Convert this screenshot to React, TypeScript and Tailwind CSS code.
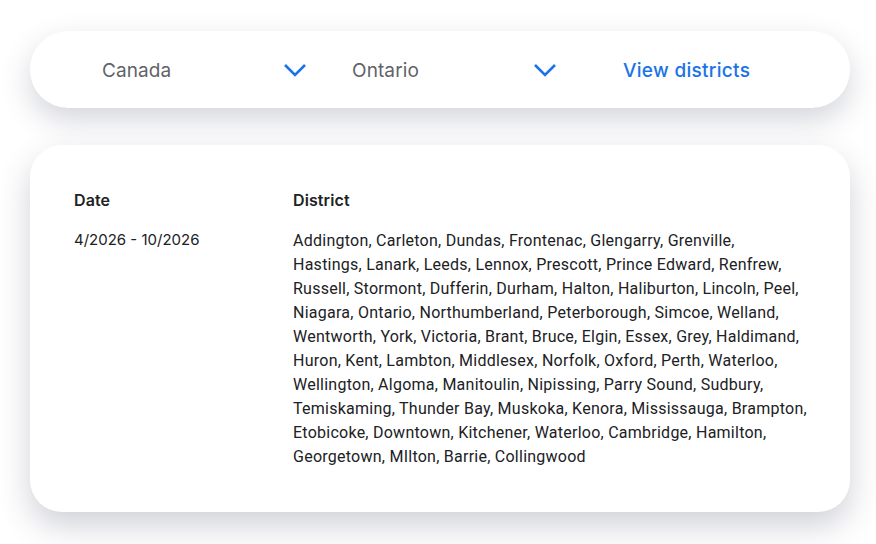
import React from 'react';

const districtLines = [
  'Addington, Carleton, Dundas, Frontenac, Glengarry, Grenville,',
  'Hastings, Lanark, Leeds, Lennox, Prescott, Prince Edward, Renfrew,',
  'Russell, Stormont, Dufferin, Durham, Halton, Haliburton, Lincoln, Peel,',
  'Niagara, Ontario, Northumberland, Peterborough, Simcoe, Welland,',
  'Wentworth, York, Victoria, Brant, Bruce, Elgin, Essex, Grey, Haldimand,',
  'Huron, Kent, Lambton, Middlesex, Norfolk, Oxford, Perth, Waterloo,',
  'Wellington, Algoma, Manitoulin, Nipissing, Parry Sound, Sudbury,',
  'Temiskaming, Thunder Bay, Muskoka, Kenora, Mississauga, Brampton,',
  'Etobicoke, Downtown, Kitchener, Waterloo, Cambridge, Hamilton,',
  'Georgetown, MIlton, Barrie, Collingwood',
];

function Chevron() {
  return (
    <svg width="24" height="14" viewBox="0 0 24 14" fill="none" className="shrink-0">
      <path d="M2 2l10 10L22 2" stroke="#1a73e8" strokeWidth="2.6" strokeLinecap="butt" strokeLinejoin="miter" />
    </svg>
  );
}

function Select({ label }: { label: string }) {
  return (
    <div className="flex w-[205px] items-center justify-between">
      <span className="pt-[3px] text-[19px] tracking-[0.1px] text-[#5f6368]">{label}</span>
      <Chevron />
    </div>
  );
}

export default function App() {
  return (
    <div className="min-h-[544px] w-[876px] bg-white pl-[30px] pr-[26px] pt-[31px] font-['Inter',sans-serif]">
      {/* Region pickers */}
      <div className="flex h-[77px] items-center rounded-[38px] bg-white pl-[72px] shadow-[0_12px_30px_rgba(60,64,90,0.22)]">
        <Select label="Canada" />
        <div className="ml-[45px]">
          <Select label="Ontario" />
        </div>
        <button className="ml-[66px] pt-[3px] text-[19px] font-medium tracking-[0.3px] text-[#1a73e8]">View districts</button>
      </div>

      {/* Districts table */}
      <div className="mt-[37px] h-[367px] rounded-[32px] bg-white px-[44px] pt-[43px] shadow-[0_14px_32px_rgba(60,64,90,0.24)]">
        <div className="flex text-[16px] font-semibold leading-6 tracking-[0.1px] text-[#202124]">
          <div className="w-[219px]">Date</div>
          <div>District</div>
        </div>
        <div className="mt-4 flex leading-6 text-[#202124]">
          <div className="w-[219px] shrink-0 text-[15px]">4/2026 - 10/2026</div>
          <div className="pt-px font-['Roboto',sans-serif] text-[16px] tracking-[0.25px]">
            {districtLines.map((line, i) => (
              <div key={i} className="whitespace-nowrap">{line}</div>
            ))}
          </div>
        </div>
      </div>
    </div>
  );
}
